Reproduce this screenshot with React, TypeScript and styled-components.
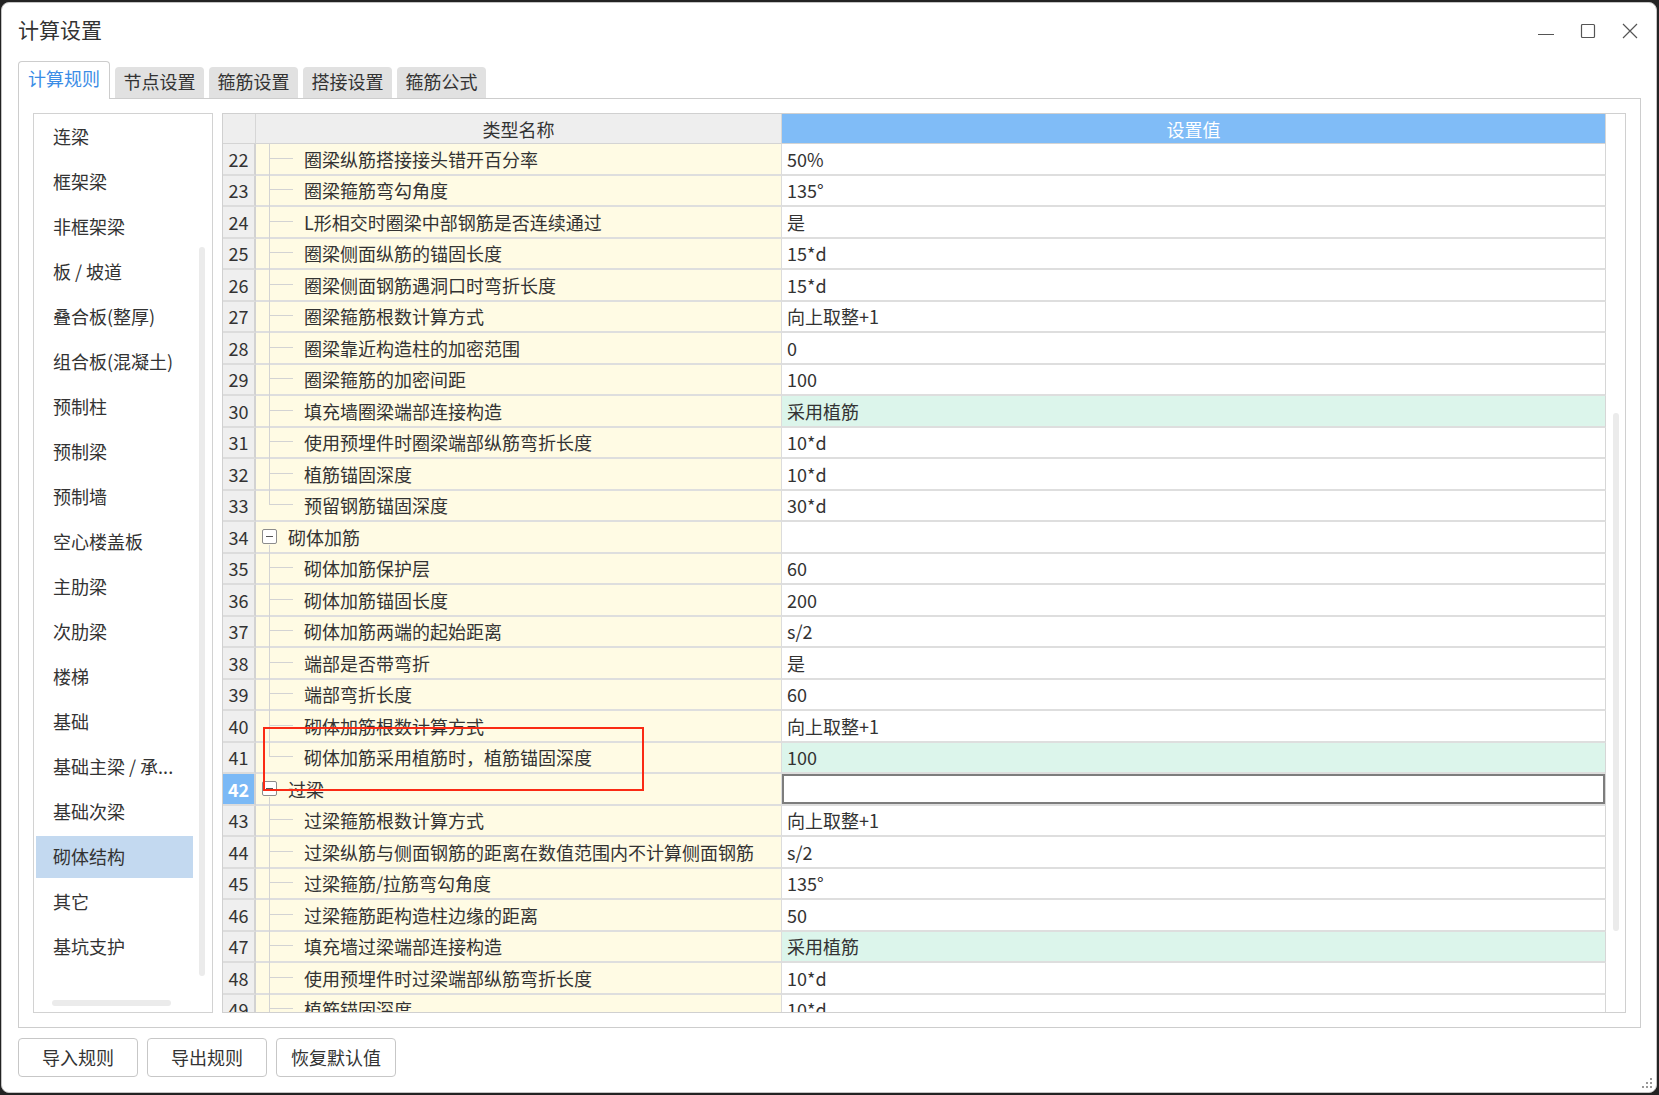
import React from 'react'
import styled, { createGlobalStyle } from 'styled-components'

const GlobalStyle = createGlobalStyle`
  html, body {
    margin: 0;
    padding: 0;
    background: #232323;
  }
  body {
    font-family: 'Noto Sans CJK SC', 'Noto Sans', sans-serif;
    color: #333;
  }
  * {
    box-sizing: border-box;
  }
`

const Window = styled.div`
  position: relative;
  margin: 2px 0 0 1px;
  width: 1656px;
  height: 1091px;
  background: #fff;
  border: 1px solid #c4c4c4;
  border-radius: 8px;
  display: flex;
  flex-direction: column;
  overflow: hidden;
`

const TitleBar = styled.div`
  height: 58px;
  display: flex;
  align-items: center;
  padding: 0 5px 6px 16px;
`

const Title = styled.div`
  font-size: 21px;
  line-height: 1;
  color: #333;
`

const Controls = styled.div`
  margin-left: auto;
  display: flex;
  padding-top: 3px;
`

const ControlButton = styled.div`
  width: 42px;
  height: 32px;
  display: flex;
  align-items: center;
  justify-content: center;
`

const TabStrip = styled.div`
  height: 37px;
  display: flex;
  align-items: flex-end;
  gap: 5px;
  padding-left: 16px;
`

const Tab = styled.div<{ $active?: boolean }>`
  position: relative;
  z-index: 1;
  display: flex;
  align-items: center;
  justify-content: center;
  font-size: 18px;
  line-height: 1;
  width: ${({ $active }) => ($active ? '92px' : '89px')};
  height: ${({ $active }) => ($active ? '38px' : '31px')};
  margin-bottom: ${({ $active }) => ($active ? '-1px' : '0')};
  padding-bottom: ${({ $active }) => ($active ? '6px' : '4px')};
  color: ${({ $active }) => ($active ? '#3b8de6' : '#333')};
  background: ${({ $active }) => ($active ? '#fff' : '#e1e1e1')};
  border: ${({ $active }) => ($active ? '1px solid #cdcdcd' : 'none')};
  border-bottom: none;
  border-radius: 4px 4px 0 0;
`

const Panel = styled.div`
  margin: 0 15px 0 16px;
  height: 930px;
  border: 1px solid #cdcdcd;
  padding: 14px;
  display: flex;
  gap: 9px;
`

const List = styled.div`
  width: 180px;
  flex-shrink: 0;
  border: 1px solid #d2d2d2;
  display: flex;
  flex-direction: column;
`

const ListBody = styled.div`
  height: 871px;
  display: flex;
`

const Items = styled.div`
  width: 162px;
  display: flex;
  flex-direction: column;
`

const Item = styled.div`
  height: 45px;
  flex-shrink: 0;
  padding: 1.5px 3px 1.5px 2px;
`

const ItemLabel = styled.div<{ $selected?: boolean }>`
  height: 100%;
  display: flex;
  align-items: center;
  padding-left: 17px;
  padding-bottom: 2px;
  font-size: 18px;
  line-height: 1;
  white-space: nowrap;
  color: #333;
  background: ${({ $selected }) => ($selected ? '#c3d9f0' : 'transparent')};
`

const VTrack = styled.div<{ $top: number; $left: number }>`
  flex: 1;
  padding-top: ${({ $top }) => $top}px;
  padding-left: ${({ $left }) => $left}px;
`

const VThumb = styled.div<{ $height: number }>`
  width: 6px;
  height: ${({ $height }) => $height}px;
  background: #ebebeb;
  border-radius: 3px;
`

const HTrack = styled.div`
  flex: 1;
  padding: 15px 0 0 18px;
`

const HThumb = styled.div`
  width: 119px;
  height: 6px;
  background: #ebebeb;
  border-radius: 3px;
`

const Table = styled.div`
  position: relative;
  flex: 1;
  border: 1px solid #d0d0d0;
  display: flex;
  overflow: hidden;
`

const Grid = styled.div`
  width: 1383px;
  flex-shrink: 0;
  display: flex;
  flex-direction: column;
  overflow: hidden;
`

const HeaderRow = styled.div`
  display: grid;
  grid-template-columns: 33px 526px 824px;
  height: 30px;
  flex-shrink: 0;
`

const HeadCell = styled.div<{ $accent?: boolean }>`
  display: flex;
  align-items: center;
  justify-content: center;
  font-size: 18px;
  line-height: 1;
  color: ${({ $accent }) => ($accent ? '#fff' : '#333')};
  background: ${({ $accent }) => ($accent ? '#80bcf7' : '#eeeeee')};
  border-bottom: 1px solid #d4d4d4;
  border-right: 1px solid #d6d6d6;
`

const Row = styled.div`
  display: grid;
  grid-template-columns: 33px 526px 824px;
  height: 31.5px;
  flex-shrink: 0;
`

const NumCell = styled.div<{ $selected?: boolean }>`
  display: flex;
  align-items: center;
  justify-content: center;
  font-size: 18px;
  line-height: 1;
  color: ${({ $selected }) => ($selected ? '#fff' : '#333')};
  font-weight: ${({ $selected }) => ($selected ? 600 : 400)};
  background: ${({ $selected }) => ($selected ? '#7bb9f6' : '#efefef')};
  border-right: 2px solid #d2d2d2;
  border-bottom: 2px solid #dcdcdc;
`

const TypeCell = styled.div<{ $group?: boolean; $last?: boolean }>`
  position: relative;
  display: flex;
  align-items: center;
  padding-left: ${({ $group }) => ($group ? '6px' : '48px')};
  font-size: 18px;
  line-height: 1;
  white-space: nowrap;
  background: #fffbe4;
  border-bottom: 2px solid #dedede;
  border-right: 1px solid #dcdcdc;

  &::before {
    content: '';
    position: absolute;
    left: 13px;
    width: 1px;
    background: #d3d3d3;
    top: ${({ $group }) => ($group ? 'calc(50% + 8px)' : '0')};
    bottom: ${({ $last }) => ($last ? 'calc(50% + 1px)' : '-2px')};
  }

  &::after {
    content: '';
    display: ${({ $group }) => ($group ? 'none' : 'block')};
    position: absolute;
    left: 13px;
    top: calc(50% - 1px);
    width: 24px;
    height: 1px;
    background: #d3d3d3;
  }
`

const MinusBox = styled.span`
  position: relative;
  width: 15px;
  height: 15px;
  border: 1px solid #8c8c8c;
  border-radius: 2px;
  background: #fff;
  flex-shrink: 0;

  &::after {
    content: '';
    position: absolute;
    left: 3px;
    right: 3px;
    top: 6px;
    height: 1px;
    background: #555;
  }
`

const GroupLabel = styled.span`
  margin-left: 11px;
`

const ValueCell = styled.div<{ $green?: boolean; $editing?: boolean }>`
  display: flex;
  align-items: center;
  padding-left: 5px;
  font-size: 18px;
  line-height: 1;
  color: #333;
  background: ${({ $green }) => ($green ? '#dcf5eb' : '#fff')};
  border-bottom: 2px solid #dedede;
  border-right: 1px solid #d6d6d6;
  box-shadow: ${({ $editing }) => ($editing ? 'inset 0 0 0 2px #7d7d7d' : 'none')};
`

const Callout = styled.div`
  position: absolute;
  left: 40px;
  top: 613px;
  width: 381px;
  height: 64px;
  border: 2px solid #fa2a14;
  pointer-events: none;
`

const ButtonRow = styled.div`
  display: flex;
  gap: 9px;
  margin-top: 10px;
  padding-left: 16px;
`

const Button = styled.button`
  width: 120px;
  height: 39px;
  border: 1px solid #c7c7c7;
  border-radius: 4px;
  background: #fff;
  font-family: inherit;
  font-size: 18px;
  line-height: 1;
  color: #333;
  padding: 0 0 2px;
`

const Grip = styled.svg`
  position: absolute;
  right: 3px;
  bottom: 3px;
`

const categories = [
  '连梁',
  '框架梁',
  '非框架梁',
  '板 / 坡道',
  '叠合板(整厚)',
  '组合板(混凝土)',
  '预制柱',
  '预制梁',
  '预制墙',
  '空心楼盖板',
  '主肋梁',
  '次肋梁',
  '楼梯',
  '基础',
  '基础主梁 / 承...',
  '基础次梁',
  '砌体结构',
  '其它',
  '基坑支护'
]

type RuleRow = {
  n: number
  name: string
  value: string
  group?: boolean
  last?: boolean
  green?: boolean
  editing?: boolean
}

const rules: RuleRow[] = [
  { n: 22, name: '圈梁纵筋搭接接头错开百分率', value: '50%' },
  { n: 23, name: '圈梁箍筋弯勾角度', value: '135°' },
  { n: 24, name: 'L形相交时圈梁中部钢筋是否连续通过', value: '是' },
  { n: 25, name: '圈梁侧面纵筋的锚固长度', value: '15*d' },
  { n: 26, name: '圈梁侧面钢筋遇洞口时弯折长度', value: '15*d' },
  { n: 27, name: '圈梁箍筋根数计算方式', value: '向上取整+1' },
  { n: 28, name: '圈梁靠近构造柱的加密范围', value: '0' },
  { n: 29, name: '圈梁箍筋的加密间距', value: '100' },
  { n: 30, name: '填充墙圈梁端部连接构造', value: '采用植筋', green: true },
  { n: 31, name: '使用预埋件时圈梁端部纵筋弯折长度', value: '10*d' },
  { n: 32, name: '植筋锚固深度', value: '10*d' },
  { n: 33, name: '预留钢筋锚固深度', value: '30*d', last: true },
  { n: 34, name: '砌体加筋', value: '', group: true },
  { n: 35, name: '砌体加筋保护层', value: '60' },
  { n: 36, name: '砌体加筋锚固长度', value: '200' },
  { n: 37, name: '砌体加筋两端的起始距离', value: 's/2' },
  { n: 38, name: '端部是否带弯折', value: '是' },
  { n: 39, name: '端部弯折长度', value: '60' },
  { n: 40, name: '砌体加筋根数计算方式', value: '向上取整+1' },
  { n: 41, name: '砌体加筋采用植筋时，植筋锚固深度', value: '100', green: true, last: true },
  { n: 42, name: '过梁', value: '', group: true, editing: true },
  { n: 43, name: '过梁箍筋根数计算方式', value: '向上取整+1' },
  { n: 44, name: '过梁纵筋与侧面钢筋的距离在数值范围内不计算侧面钢筋', value: 's/2' },
  { n: 45, name: '过梁箍筋/拉筋弯勾角度', value: '135°' },
  { n: 46, name: '过梁箍筋距构造柱边缘的距离', value: '50' },
  { n: 47, name: '填充墙过梁端部连接构造', value: '采用植筋', green: true },
  { n: 48, name: '使用预埋件时过梁端部纵筋弯折长度', value: '10*d' },
  { n: 49, name: '植筋锚固深度', value: '10*d' }
]

const tabs = ['计算规则', '节点设置', '箍筋设置', '搭接设置', '箍筋公式']

export default function App() {
  return (
    <>
      <GlobalStyle />
      <Window>
        <TitleBar>
          <Title>计算设置</Title>
          <Controls>
            <ControlButton>
              <svg width="16" height="16" viewBox="0 0 16 16">
                <line x1="0" y1="11.5" x2="16" y2="11.5" stroke="#555" strokeWidth="1" />
              </svg>
            </ControlButton>
            <ControlButton>
              <svg width="16" height="16" viewBox="0 0 16 16">
                <rect x="1.5" y="1.5" width="13" height="13" rx="1" fill="none" stroke="#555" strokeWidth="1.2" />
              </svg>
            </ControlButton>
            <ControlButton>
              <svg width="16" height="16" viewBox="0 0 16 16">
                <path d="M1 1 L15 15 M15 1 L1 15" stroke="#555" strokeWidth="1.2" />
              </svg>
            </ControlButton>
          </Controls>
        </TitleBar>

        <TabStrip>
          {tabs.map((t, i) => (
            <Tab key={t} $active={i === 0}>
              {t}
            </Tab>
          ))}
        </TabStrip>

        <Panel>
          <List>
            <ListBody>
              <Items>
                {categories.map((c) => (
                  <Item key={c}>
                    <ItemLabel $selected={c === '砌体结构'}>{c}</ItemLabel>
                  </Item>
                ))}
              </Items>
              <VTrack $top={133} $left={3}>
                <VThumb $height={729} />
              </VTrack>
            </ListBody>
            <HTrack>
              <HThumb />
            </HTrack>
          </List>

          <Table>
            <Grid>
              <HeaderRow>
                <HeadCell />
                <HeadCell>类型名称</HeadCell>
                <HeadCell $accent>设置值</HeadCell>
              </HeaderRow>
              {rules.map((r) => (
                <Row key={r.n}>
                  <NumCell $selected={r.editing}>{r.n}</NumCell>
                  <TypeCell $group={r.group} $last={r.last}>
                    {r.group ? (
                      <>
                        <MinusBox />
                        <GroupLabel>{r.name}</GroupLabel>
                      </>
                    ) : (
                      r.name
                    )}
                  </TypeCell>
                  <ValueCell $green={r.green} $editing={r.editing}>
                    {r.value}
                  </ValueCell>
                </Row>
              ))}
            </Grid>
            <VTrack $top={299} $left={7}>
              <VThumb $height={518} />
            </VTrack>
            <Callout />
          </Table>
        </Panel>

        <ButtonRow>
          <Button>导入规则</Button>
          <Button>导出规则</Button>
          <Button>恢复默认值</Button>
        </ButtonRow>

        <Grip width="12" height="12" viewBox="0 0 12 12">
          <rect x="9" y="1" width="2" height="2" fill="#999" />
          <rect x="5" y="5" width="2" height="2" fill="#999" />
          <rect x="9" y="5" width="2" height="2" fill="#999" />
          <rect x="1" y="9" width="2" height="2" fill="#999" />
          <rect x="5" y="9" width="2" height="2" fill="#999" />
          <rect x="9" y="9" width="2" height="2" fill="#999" />
        </Grip>
      </Window>
    </>
  )
}
